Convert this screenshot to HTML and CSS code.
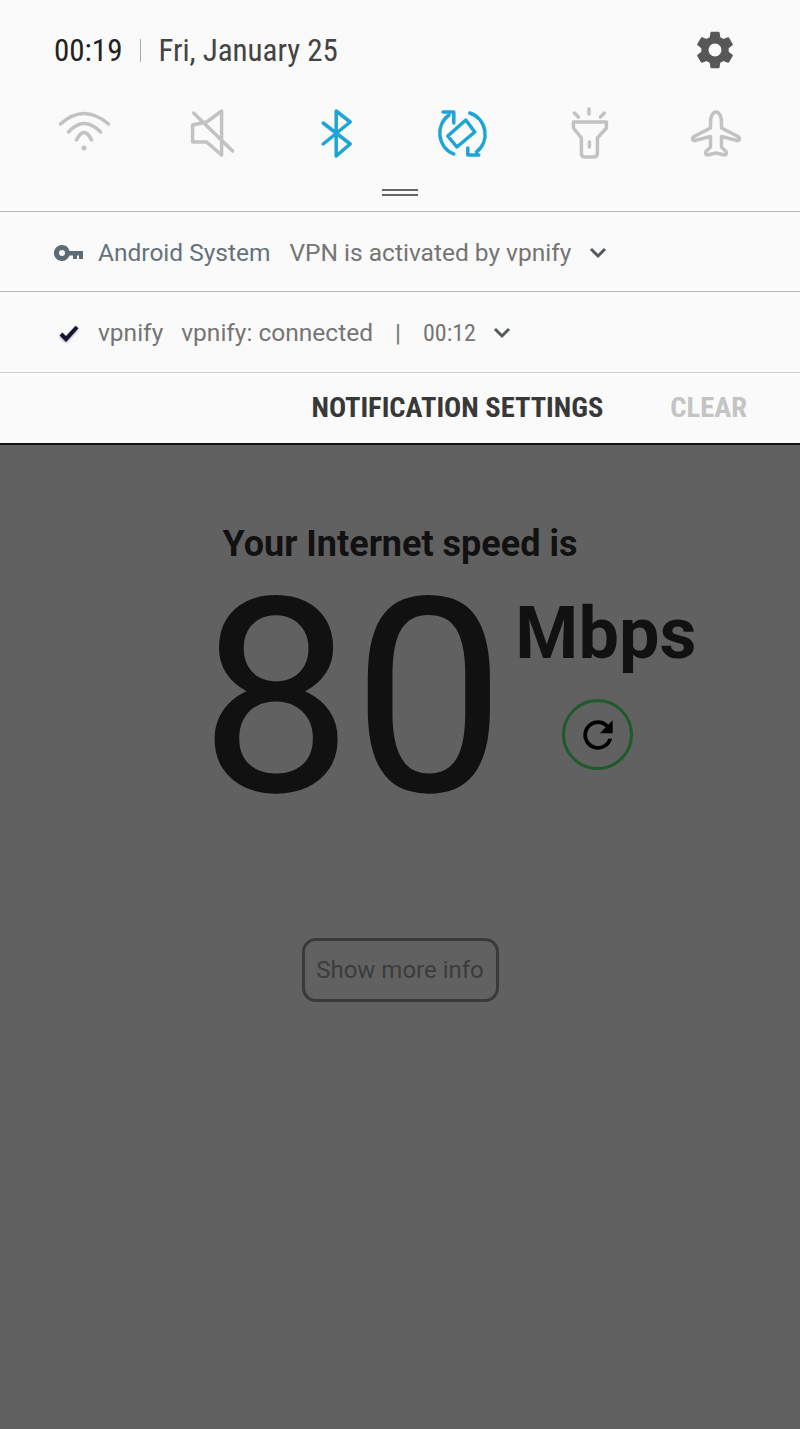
FILE: index.html
```html
<!DOCTYPE html>
<html lang="en">
<head>
    <meta charset="UTF-8">
    <meta name="viewport" content="width=device-width, initial-scale=1.0">
    <title>Internet speed</title>
    <link rel="stylesheet" href="styles.css">
</head>
<body>
    <div class="shade">
        <div class="status">
            <span class="clock">00:19</span>
            <span class="status-sep"></span>
            <span class="date">Fri, January 25</span>
            <svg class="gear" viewBox="0 0 24 24" width="44" height="44"><path d="M19.43 12.98c.04-.32.07-.64.07-.98s-.03-.66-.07-.98l2.11-1.65c.19-.15.24-.42.12-.64l-2-3.46c-.12-.22-.39-.3-.61-.22l-2.49 1c-.52-.4-1.08-.73-1.69-.98l-.38-2.65C14.46 2.18 14.25 2 14 2h-4c-.25 0-.46.18-.49.42l-.38 2.65c-.61.25-1.17.59-1.69.98l-2.49-1c-.23-.09-.49 0-.61.22l-2 3.46c-.13.22-.07.49.12.64l2.11 1.65c-.04.32-.07.65-.07.98s.03.66.07.98l-2.11 1.65c-.19.15-.24.42-.12.64l2 3.46c.12.22.39.3.61.22l2.49-1c.52.4 1.08.73 1.69.98l.38 2.65c.03.24.24.42.49.42h4c.25 0 .46-.18.49-.42l.38-2.65c.61-.25 1.17-.59 1.69-.98l2.49 1c.23.09.49 0 .61-.22l2-3.46c.12-.22.07-.49-.12-.64l-2.11-1.65zM12 15.5c-1.93 0-3.5-1.57-3.5-3.5s1.57-3.5 3.5-3.5 3.5 1.57 3.5 3.5-1.57 3.5-3.5 3.5z"/></svg>
        </div>

        <div class="toggles">
            <svg class="toggle" viewBox="0 0 60 60" width="60" height="60"><path d="M6.500 21Q30 0 54.500 21M14.500 29Q30 12 46.500 29M22.500 37Q30 22 37.500 37"/><circle class="dot" cx="30" cy="45" r="2.500"/></svg>
            <svg class="toggle" viewBox="0 0 60 60" width="60" height="60"><path d="M26.600 19L12.600 22V39H26.600L41.600 52V8L26.600 19M13.600 10L52.600 48"/></svg>
            <svg class="toggle on" viewBox="0 0 60 60" width="60" height="60"><path d="M16.200 20L43.200 41L29.200 53V8L43.200 19L16.200 41"/></svg>
            <svg class="toggle on" viewBox="0 0 60 60" width="60" height="60"><path d="M20.800 51A22.500 22.500 0 0 1 16 12M36.800 10A22.500 22.500 0 0 1 43.500 49M10 9H20.800V20M34.800 45V52H45.800M32.800 17L41.800 29L23.800 44L14.800 33Z"/></svg>
            <svg class="toggle" viewBox="0 0 60 60" width="60" height="60"><path d="M13.400 19H46.400V25L37.400 35V50C37.400 53 36 54 34 54H25C23 54 21.400 53 21.400 50V35L13.400 25ZM29.400 39V44M29 6V11M14.400 10L18.400 14M44.400 10L40.400 14"/></svg>
            <svg class="toggle" viewBox="0 0 60 60" width="60" height="60"><path d="M30 9C33 9 35.500 13 35.500 19V25L52 33.500C54 35 54 38 51 37.500L35.500 33.500V44L40 48.500C41 51 40 52 38.500 52L30 50L21.500 52C20 52 19 51 20 48.500L24.500 44V33.500L9 37.500C6 38 6 35 8 33.500L24.500 25V19C24.500 13 27 9 30 9Z"/></svg>
        </div>

        <div class="handle"></div>

        <div class="note">
            <svg class="note-key" viewBox="0 0 30 16" width="30" height="16"><path d="M8 0a8 8 0 1 0 7.500 10.500H19V14h4v-3.500h2V14h4V6H15.500A8 8 0 0 0 8 0zm0 5a3 3 0 1 1 0 6 3 3 0 0 1 0-6z"/></svg>
            <span class="note-app">Android System</span>
            <span class="note-text">VPN is activated by vpnify</span>
            <svg class="chevron" viewBox="0 0 18 12" width="18" height="12"><path d="M2 2L9 9L16 2"/></svg>
        </div>
        <div class="note note-last">
            <svg class="note-check" viewBox="0 0 20 18" width="20" height="18"><path d="M2 10L7 15L18 3"/></svg>
            <span class="note-app">vpnify</span>
            <span class="note-text">vpnify: connected</span>
            <span class="note-bar">|</span>
            <span class="note-time">00:12</span>
            <svg class="chevron" viewBox="0 0 18 12" width="18" height="12"><path d="M2 2L9 9L16 2"/></svg>
        </div>
        <div class="actions">
            <span class="action">NOTIFICATION SETTINGS</span>
            <span class="action muted">CLEAR</span>
        </div>
    </div>

    <div class="speed">
        <h1 class="speed-title">Your Internet speed is</h1>
        <div class="reading">
            <span class="value">80</span>
            <div class="unit-col">
                <span class="unit">Mbps</span>
                <div class="refresh">
                    <svg viewBox="0 0 24 24" width="44" height="44"><path d="M17.650 6.350A7.960 7.960 0 0 0 12 4a8 8 0 1 0 7.730 10h-2.080A6 6 0 1 1 12 6c1.660 0 3.140.69 4.220 1.780L13 11h7V4l-2.350 2.350z"/></svg>
                </div>
            </div>
        </div>
        <button class="more">Show more info</button>
    </div>
</body>
</html>
```

FILE: styles.css
```css
* {
    box-sizing: border-box;
}
body {
    margin: 0;
    height: 1429px;
    overflow: hidden;
    font-family: Roboto, sans-serif;
    background-color: #616161;
    color: #111;
}

/* notification shade */
.shade {
    height: 445px;
    background-color: #fafafa;
    border-bottom: 2px solid #111;
}
.status {
    display: flex;
    align-items: center;
    height: 100px;
    padding-left: 54px;
    font-size: 31px;
    font-stretch: 75%;
}
.clock {
    color: #222;
}
.status-sep {
    width: 1px;
    height: 23px;
    margin: 0 17px 0 18px;
    background-color: #aaa;
}
.date {
    color: #444;
}
.gear {
    margin-left: auto;
    margin-right: 63px;
    fill: #575757;
}
.toggles {
    display: flex;
    justify-content: space-between;
    padding: 3px 54px 0;
    height: 72px;
}
.toggle {
    fill: none;
    stroke: #c2c2c2;
    stroke-width: 3.500;
    stroke-linecap: round;
    stroke-linejoin: round;
}
.toggle.on {
    stroke: #1ea5d6;
}
.toggle .dot {
    fill: #c2c2c2;
    stroke: none;
}
.handle {
    width: 36px;
    height: 7px;
    margin: 17px auto 15px;
    border-top: 2px solid #666;
    border-bottom: 2px solid #666;
}
.note {
    display: flex;
    align-items: center;
    height: 80px;
    padding: 2px 0 0 54px;
    border-top: 1px solid #b8b8b8;
    font-size: 24.500px;
    color: #757575;
}
.note-last {
    height: 82px;
    padding-top: 1px;
    border-bottom: 1px solid #cfcfcf;
}
.note-key {
    fill: #5c6b75;
    margin-right: 14px;
}
.note-check {
    margin: 0 19px 0 5px;
    fill: none;
    stroke: #15152c;
    stroke-width: 4;
    filter: drop-shadow(0 1px 1px #9a9ac8);
}
.note-app {
    margin-right: 19px;
    color: #64727b;
}
.note-last .note-app {
    margin-right: 18px;
    color: #757575;
}
.note-bar {
    margin: 0 22px;
}
.note-time {
    font-size: 24px;
    font-stretch: 75%;
}
.chevron {
    margin-left: 18px;
    fill: none;
    stroke: #55595c;
    stroke-width: 3;
}
.note-last .chevron {
    margin-left: 17px;
}
.actions {
    display: flex;
    justify-content: flex-end;
    align-items: center;
    gap: 67px;
    height: 70px;
    padding: 0 53px 2px 0;
    font-size: 28.500px;
    font-weight: 700;
    font-stretch: 75%;
    color: #383838;
}
.action.muted {
    color: #c4c4c4;
}

/* speed result */
.speed {
    display: flex;
    flex-direction: column;
    align-items: center;
}
.speed-title {
    margin: 77px 0 0;
    font-size: 36px;
    font-weight: 700;
    line-height: 44px;
}
.reading {
    display: flex;
    align-items: flex-start;
    margin-left: 96px;
}
.value {
    font-size: 272px;
    line-height: 240px;
    margin-top: 12px;
}
.unit-col {
    display: flex;
    flex-direction: column;
    align-items: center;
    margin-left: 10px;
}
.unit {
    font-size: 72px;
    font-weight: 700;
    line-height: 80px;
    margin-top: 28px;
}
.refresh {
    display: flex;
    align-items: center;
    justify-content: center;
    width: 71px;
    height: 71px;
    margin: 25px 16px 0 0;
    border: 3px solid #1f5a2a;
    border-radius: 50%;
}
.more {
    width: 197px;
    height: 64px;
    margin-top: 120px;
    background: none;
    border: 3px solid #3a3a3a;
    border-radius: 14px;
    font: 24px Roboto, sans-serif;
    color: #3c3c3c;
}
```
